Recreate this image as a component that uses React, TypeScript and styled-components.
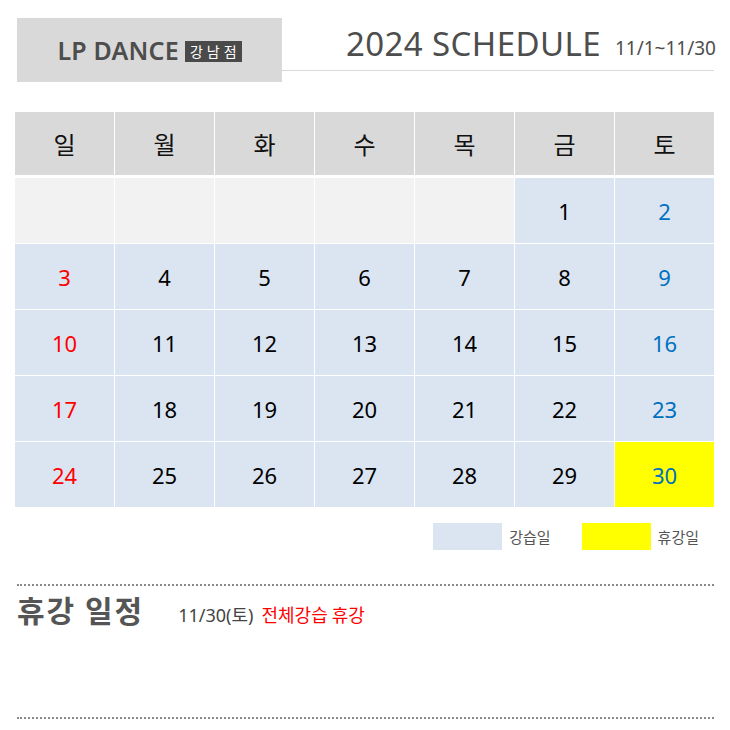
import styled, {createGlobalStyle} from "styled-components";

const GlobalStyle = createGlobalStyle`
  body {
    margin: 0;
    background: #fff;
    font-family: "Noto Sans", "Noto Sans CJK KR", sans-serif;
  }
`;

const Page = styled.div`
  width: 730px;
  padding: 18px 16px 0 15px;
  box-sizing: border-box;
`;

const Header = styled.header`
  display: flex;
  margin-left: 2px;
`;

const LogoBox = styled.div`
  width: 265px;
  height: 64px;
  background: #d9d9d9;
  display: flex;
  align-items: center;
  justify-content: center;
  gap: 6px;
`;

const LogoText = styled.span`
  font-size: 25px;
  font-weight: 600;
  color: #4d4d4d;
  letter-spacing: 0.2px;
`;

const Badge = styled.span`
  background: #4a4a4a;
  color: #fff;
  font-family: "Noto Sans CJK KR", sans-serif;
  font-size: 14px;
  letter-spacing: 4px;
  padding: 0 1px 0 5px;
  line-height: 21px;
  margin-top: 2px;
`;

const TitleArea = styled.div`
  flex: 1;
  height: 53px;
  border-bottom: 1px solid #d9d9d9;
  display: flex;
  align-items: flex-end;
  justify-content: flex-end;
  gap: 14px;
  padding-bottom: 10px;
  box-sizing: border-box;
`;

const Title = styled.h1`
  margin: 0;
  font-size: 33px;
  font-weight: 400;
  color: #4d4d4d;
  line-height: 1;
  letter-spacing: 0.4px;
`;

const Range = styled.span`
  font-size: 19px;
  color: #4d4d4d;
  line-height: 1;
  margin-right: -2px;
  margin-bottom: 2px;
`;

const Calendar = styled.div`
  margin-top: 30px;
  width: 699px;
`;

const HeadRow = styled.div`
  display: grid;
  grid-template-columns: repeat(7, 1fr);
  gap: 1px;
  margin-bottom: 3px;
`;

const HeadCell = styled.div`
  height: 63px;
  background: #d9d9d9;
  display: flex;
  align-items: center;
  justify-content: center;
  font-family: "Noto Sans CJK KR", sans-serif;
  font-size: 24px;
  color: #111;
`;

const Grid = styled.div`
  display: grid;
  grid-template-columns: repeat(7, 1fr);
  grid-auto-rows: 65px;
  gap: 1px;
`;

const Cell = styled.div<{$bg: string; $color: string}>`
  background: ${p => p.$bg};
  color: ${p => p.$color};
  display: flex;
  align-items: center;
  justify-content: center;
  font-size: 22px;
`;

const Legend = styled.div`
  display: flex;
  justify-content: flex-end;
  align-items: center;
  gap: 31px;
  margin-top: 16px;
  padding-right: 15px;
`;

const LegendItem = styled.div`
  display: flex;
  align-items: center;
  gap: 7px;
  font-family: "Noto Sans CJK KR", sans-serif;
  font-size: 15px;
  color: #555;
`;

const Swatch = styled.span<{$bg: string}>`
  width: 69px;
  height: 27px;
  background: ${p => p.$bg};
`;

const Notice = styled.section`
  margin: 34px 0 0 2px;
  border-top: 2px dotted #888;
  border-bottom: 2px dotted #888;
  height: 135px;
  box-sizing: border-box;
  padding-top: 1px;
  display: flex;
  align-items: baseline;
`;

const NoticeTitle = styled.h2`
  margin: 0 34px 0 0;
  font-family: "Noto Sans CJK KR", sans-serif;
  font-size: 30px;
  font-weight: 700;
  color: #555;
  letter-spacing: 2px;
`;

const NoticeDate = styled.span`
  font-size: 18px;
  color: #444;
  margin-right: 8px;
`;

const NoticeText = styled.span`
  font-family: "Noto Sans CJK KR", sans-serif;
  font-size: 18px;
  color: #ff0000;
  font-weight: 400;
`;

const days = ["일", "월", "화", "수", "목", "금", "토"];

function cellStyle(day: number | null, col: number) {
    if (day === null) return {bg: "#f2f2f2", color: "#000"};
    const bg = day === 30 ? "#ffff00" : "#dbe5f1";
    const color = col === 0 ? "#ff0000" : col === 6 ? "#0070c0" : "#000";
    return {bg, color};
}

function App() {
    const cells: (number | null)[] = [null, null, null, null, null];
    for (let d = 1; d <= 30; d++) cells.push(d);

    return <Page>
        <GlobalStyle/>
        <Header>
            <LogoBox>
                <LogoText>LP DANCE</LogoText>
                <Badge>강남점</Badge>
            </LogoBox>
            <TitleArea>
                <Title>2024 SCHEDULE</Title>
                <Range>11/1~11/30</Range>
            </TitleArea>
        </Header>

        <Calendar>
            <HeadRow>
                {days.map(d => <HeadCell key={d}>{d}</HeadCell>)}
            </HeadRow>
            <Grid>
                {cells.map((day, i) => {
                    const s = cellStyle(day, i % 7);
                    return <Cell key={i} $bg={s.bg} $color={s.color}>{day ?? ""}</Cell>
                })}
            </Grid>
            <Legend>
                <LegendItem><Swatch $bg="#dbe5f1"/>강습일</LegendItem>
                <LegendItem><Swatch $bg="#ffff00"/>휴강일</LegendItem>
            </Legend>
        </Calendar>

        <Notice>
            <NoticeTitle>휴강 일정</NoticeTitle>
            <NoticeDate>11/30(토)</NoticeDate>
            <NoticeText>전체강습 휴강</NoticeText>
        </Notice>
    </Page>
}

export default App;
